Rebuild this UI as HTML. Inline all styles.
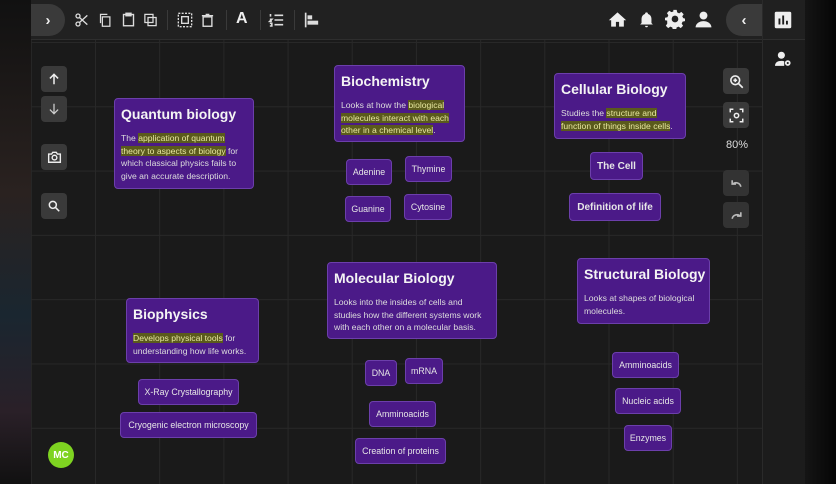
<!DOCTYPE html>
<html><head><meta charset="utf-8"><style>
*{margin:0;padding:0;box-sizing:border-box}
body{width:836px;height:484px;overflow:hidden;background:#0c0c0e;font-family:"Liberation Sans",sans-serif;position:relative}
.lstrip{position:absolute;left:0;top:0;width:31px;height:484px;background:linear-gradient(180deg,#111 0%,#2a2220 40%,#1a2630 65%,#2a2028 85%,#111 100%)}
.main{position:absolute;left:31px;top:0;width:731px;height:484px;background-color:#1a1a1a;
background-image:linear-gradient(90deg,#282828 1px,transparent 1px),linear-gradient(180deg,#282828 1px,transparent 1px);
background-size:64.2px 64.3px;background-position:64px 42px}
.tb{position:absolute;left:31px;top:0;width:731px;height:40px;background:#212121;border-bottom:1px solid #2e2e2e}
.side{position:absolute;left:762px;top:0;width:43px;height:484px;background:#1c1c1c;border-left:1px solid #2a2a2a}
.side .top{height:40px;border-bottom:1px solid #2e2e2e;background:#202020}
.rdark{position:absolute;left:805px;top:0;width:31px;height:484px;background:linear-gradient(90deg,#151515,#050505)}
.pill{position:absolute;background:#3a3a3a;color:#eee;font-size:15px;font-weight:bold;display:flex;align-items:center;justify-content:center}
.ic{position:absolute}
.sep{position:absolute;top:10px;width:1px;height:20px;background:#3a3a3a}
.btn{position:absolute;width:26px;height:26px;background:#3a3a3a;border-radius:4px;display:flex;align-items:center;justify-content:center}
.node{position:absolute;background:#4b1a88;border:1px solid #6c3fab;border-radius:4px;color:#eee}
.big{padding:7px 6px}
.big h3{font-size:14px;font-weight:bold;color:#f4f4f4;margin-bottom:10px;white-space:nowrap}
.big p{font-size:8.6px;line-height:12.6px;color:#ddd}
.hl{background:#5a5a1c;color:#e8e8a0}
.sm{font-size:8.8px;display:flex;align-items:center;justify-content:center;white-space:nowrap;color:#e6e6e6}
.b{font-weight:bold;font-size:10px}
</style></head><body>
<div class="lstrip"></div>
<div class="main"></div>
<div class="tb"></div>
<div class="side"><div class="top"></div></div>
<div class="rdark"></div>

<div class="pill" style="left:31px;top:4px;width:34px;height:32px;border-radius:0 16px 16px 0">›</div>
<svg class="ic" style="left:74px;top:12px" width="16" height="16" viewBox="0 0 24 24" fill="none" stroke="#ddd" stroke-width="2"><circle cx="6" cy="6" r="3"/><circle cx="6" cy="18" r="3"/><path d="M8 8L20 19M8 16L20 5"/></svg>
<svg class="ic" style="left:98px;top:12px" width="15" height="16" viewBox="0 0 24 24" fill="none" stroke="#ddd" stroke-width="2"><rect x="7" y="7" width="12" height="15"/><path d="M4 17V3h11"/></svg>
<svg class="ic" style="left:121px;top:11px" width="15" height="17" viewBox="0 0 24 24" fill="none" stroke="#ddd" stroke-width="2.2"><rect x="4" y="4" width="16" height="18"/><rect x="8" y="2" width="8" height="4" fill="#ddd"/></svg>
<svg class="ic" style="left:143px;top:12px" width="15" height="16" viewBox="0 0 24 24" fill="none" stroke="#ddd" stroke-width="2"><rect x="3" y="3" width="13" height="13"/><rect x="8" y="8" width="13" height="13"/></svg>
<div class="sep" style="left:167px"></div>
<svg class="ic" style="left:177px;top:12px" width="16" height="16" viewBox="0 0 24 24" fill="none" stroke="#ddd" stroke-width="2"><rect x="2" y="2" width="20" height="20" stroke-dasharray="3 2"/><rect x="7" y="7" width="10" height="10"/></svg>
<svg class="ic" style="left:200px;top:11px" width="15" height="18" viewBox="0 0 24 24" fill="none" stroke="#ddd" stroke-width="2.2"><path d="M3 5h18M9 3h6"/><rect x="5" y="7" width="14" height="15"/></svg>
<div class="sep" style="left:226px"></div>
<div class="ic" style="left:236px;top:10px;color:#eee;font-size:16px;font-weight:bold">A</div>
<div class="sep" style="left:260px"></div>
<svg class="ic" style="left:268px;top:12px" width="17" height="16" viewBox="0 0 24 24" fill="none" stroke="#ddd" stroke-width="2.4"><path d="M9 5h13M9 12h13M9 19h13M3 3v4M2 11h3l-3 3h3M2 17h3v4H2"/></svg>
<div class="sep" style="left:294px"></div>
<svg class="ic" style="left:303px;top:12px" width="17" height="16" viewBox="0 0 24 24" fill="#ddd"><rect x="2" y="1" width="2.5" height="22"/><rect x="6" y="5" width="7" height="6"/><rect x="6" y="13" width="16" height="6"/></svg>

<svg class="ic" style="left:608px;top:10px" width="19" height="19" viewBox="0 0 24 24" fill="#eee"><path d="M12 3L1 13h3v8h6v-6h4v6h6v-8h3z"/></svg>
<svg class="ic" style="left:638px;top:10px" width="17" height="19" viewBox="0 0 24 24" fill="#eee"><path d="M12 2a2 2 0 012 2 7 7 0 015 7v6l2 2H3l2-2v-6a7 7 0 015-7 2 2 0 012-2zM10 21h4a2 2 0 01-4 0z"/></svg>
<svg class="ic" style="left:665px;top:9px" width="20" height="20" viewBox="0 0 24 24" fill="#eee"><path d="M10 1h4l.6 3 2.4 1.2 2.6-1.7 2.8 2.8-1.7 2.6L21.9 11 24 11.5v3l-2.9.6-1.1 2.4 1.7 2.6-2.8 2.8-2.6-1.7-2.4 1-.5 3h-4l-.6-3-2.4-1-2.6 1.7-2.8-2.8 1.7-2.6L2.6 14 0 13.5v-3l2.9-.6L4 7.5 2.3 4.9l2.8-2.8 2.6 1.7L10 3z"/><circle cx="12" cy="12" r="4" fill="#212121"/></svg>
<svg class="ic" style="left:694px;top:10px" width="19" height="19" viewBox="0 0 24 24" fill="#eee"><circle cx="12" cy="7" r="5"/><path d="M2 22c0-5 5-8 10-8s10 3 10 8z"/></svg>
<div class="pill" style="left:726px;top:4px;width:36px;height:32px;border-radius:16px 0 0 16px">‹</div>
<svg class="ic" style="left:774px;top:11px" width="18" height="18" viewBox="0 0 24 24"><rect x="1" y="1" width="22" height="22" rx="2" fill="#eee"/><rect x="6" y="10" width="2.5" height="8" fill="#1c1c1c"/><rect x="11" y="6" width="2.5" height="12" fill="#1c1c1c"/><rect x="16" y="13" width="2.5" height="5" fill="#1c1c1c"/></svg>
<svg class="ic" style="left:774px;top:51px" width="19" height="17" viewBox="0 0 24 24" fill="#eee"><circle cx="9" cy="6" r="5"/><path d="M0 21c0-5 4-7 9-7 2 0 3 .3 4 .6V21z"/><circle cx="18" cy="17" r="4"/><circle cx="18" cy="17" r="1.5" fill="#1c1c1c"/></svg>

<div class="btn" style="left:41px;top:66px"><svg width="14" height="14" viewBox="0 0 24 24" fill="none" stroke="#eee" stroke-width="2.6"><path d="M12 21V4M5 11l7-7 7 7"/></svg></div>
<div class="btn" style="left:41px;top:96px"><svg width="14" height="14" viewBox="0 0 24 24" fill="none" stroke="#ccc" stroke-width="2.2"><path d="M12 3v17M5 13l7 7 7-7"/></svg></div>
<div class="btn" style="left:41px;top:144px"><svg width="15" height="14" viewBox="0 0 24 24" fill="none" stroke="#eee" stroke-width="2.4"><path d="M2 7h5l2-3h6l2 3h5v14H2z"/><circle cx="12" cy="13" r="4"/></svg></div>
<div class="btn" style="left:41px;top:193px"><svg width="14" height="14" viewBox="0 0 24 24" fill="none" stroke="#eee" stroke-width="2.6"><circle cx="10" cy="10" r="6"/><path d="M14.5 14.5L21 21"/></svg></div>
<div class="ic" style="left:48px;top:442px;width:26px;height:26px;border-radius:50%;background:#7ed321;color:#fff;font-size:10px;font-weight:bold;display:flex;align-items:center;justify-content:center">MC</div>

<div class="btn" style="left:723px;top:68px"><svg width="15" height="15" viewBox="0 0 24 24" fill="none" stroke="#eee" stroke-width="2.6"><circle cx="10" cy="10" r="7"/><path d="M15 15l7 7M7 10h6M10 7v6"/></svg></div>
<div class="btn" style="left:723px;top:102px"><svg width="15" height="15" viewBox="0 0 24 24" fill="none" stroke="#eee" stroke-width="2.4"><path d="M2 7V2h5M17 2h5v5M22 17v5h-5M7 22H2v-5"/><circle cx="12" cy="12" r="3.5"/></svg></div>
<div class="ic" style="left:726px;top:139px;color:#ddd;font-size:11px">80%</div>
<div class="btn" style="left:723px;top:170px;background:#333"><svg width="13" height="13" viewBox="0 0 24 24" fill="none" stroke="#bbb" stroke-width="3"><path d="M20 18a9 9 0 00-15-5M4 6v7h7"/></svg></div>
<div class="btn" style="left:723px;top:202px;background:#333"><svg width="13" height="13" viewBox="0 0 24 24" fill="none" stroke="#bbb" stroke-width="3"><path d="M4 18a9 9 0 0115-5M20 6v7h-7"/></svg></div>

<div class="node big" style="left:114px;top:98px;width:140px;height:91px"><h3>Quantum biology</h3><p>The <span class="hl">application of quantum theory to aspects of biology</span> for which classical physics fails to give an accurate description.</p></div>
<div class="node big" style="left:334px;top:65px;width:131px;height:77px"><h3>Biochemistry</h3><p>Looks at how the <span class="hl">biological molecules interact with each other in a chemical level</span>.</p></div>
<div class="node big" style="left:554px;top:73px;width:132px;height:66px"><h3>Cellular Biology</h3><p>Studies the <span class="hl">structure and function of things inside cells</span>.</p></div>
<div class="node big" style="left:327px;top:262px;width:170px;height:77px"><h3>Molecular Biology</h3><p>Looks into the insides of cells and studies how the different systems work with each other on a molecular basis.</p></div>
<div class="node big" style="left:577px;top:258px;width:133px;height:66px"><h3>Structural Biology</h3><p>Looks at shapes of biological molecules.</p></div>
<div class="node big" style="left:126px;top:298px;width:133px;height:65px"><h3>Biophysics</h3><p><span class="hl">Develops physical tools</span> for understanding how life works.</p></div>

<div class="node sm" style="left:346px;top:159px;width:46px;height:26px">Adenine</div>
<div class="node sm" style="left:405px;top:156px;width:47px;height:26px">Thymine</div>
<div class="node sm" style="left:345px;top:196px;width:46px;height:26px">Guanine</div>
<div class="node sm" style="left:404px;top:194px;width:48px;height:26px">Cytosine</div>
<div class="node sm b" style="left:590px;top:152px;width:53px;height:28px">The Cell</div>
<div class="node sm b" style="left:569px;top:193px;width:92px;height:28px">Definition of life</div>
<div class="node sm" style="left:138px;top:379px;width:101px;height:26px">X-Ray Crystallography</div>
<div class="node sm" style="left:120px;top:412px;width:137px;height:26px">Cryogenic electron microscopy</div>
<div class="node sm" style="left:365px;top:360px;width:32px;height:26px">DNA</div>
<div class="node sm" style="left:405px;top:358px;width:38px;height:26px">mRNA</div>
<div class="node sm" style="left:369px;top:401px;width:67px;height:26px">Amminoacids</div>
<div class="node sm" style="left:355px;top:438px;width:91px;height:26px">Creation of proteins</div>
<div class="node sm" style="left:612px;top:352px;width:67px;height:26px">Amminoacids</div>
<div class="node sm" style="left:615px;top:388px;width:66px;height:26px">Nucleic acids</div>
<div class="node sm" style="left:624px;top:425px;width:48px;height:26px">Enzymes</div>
</body></html>
